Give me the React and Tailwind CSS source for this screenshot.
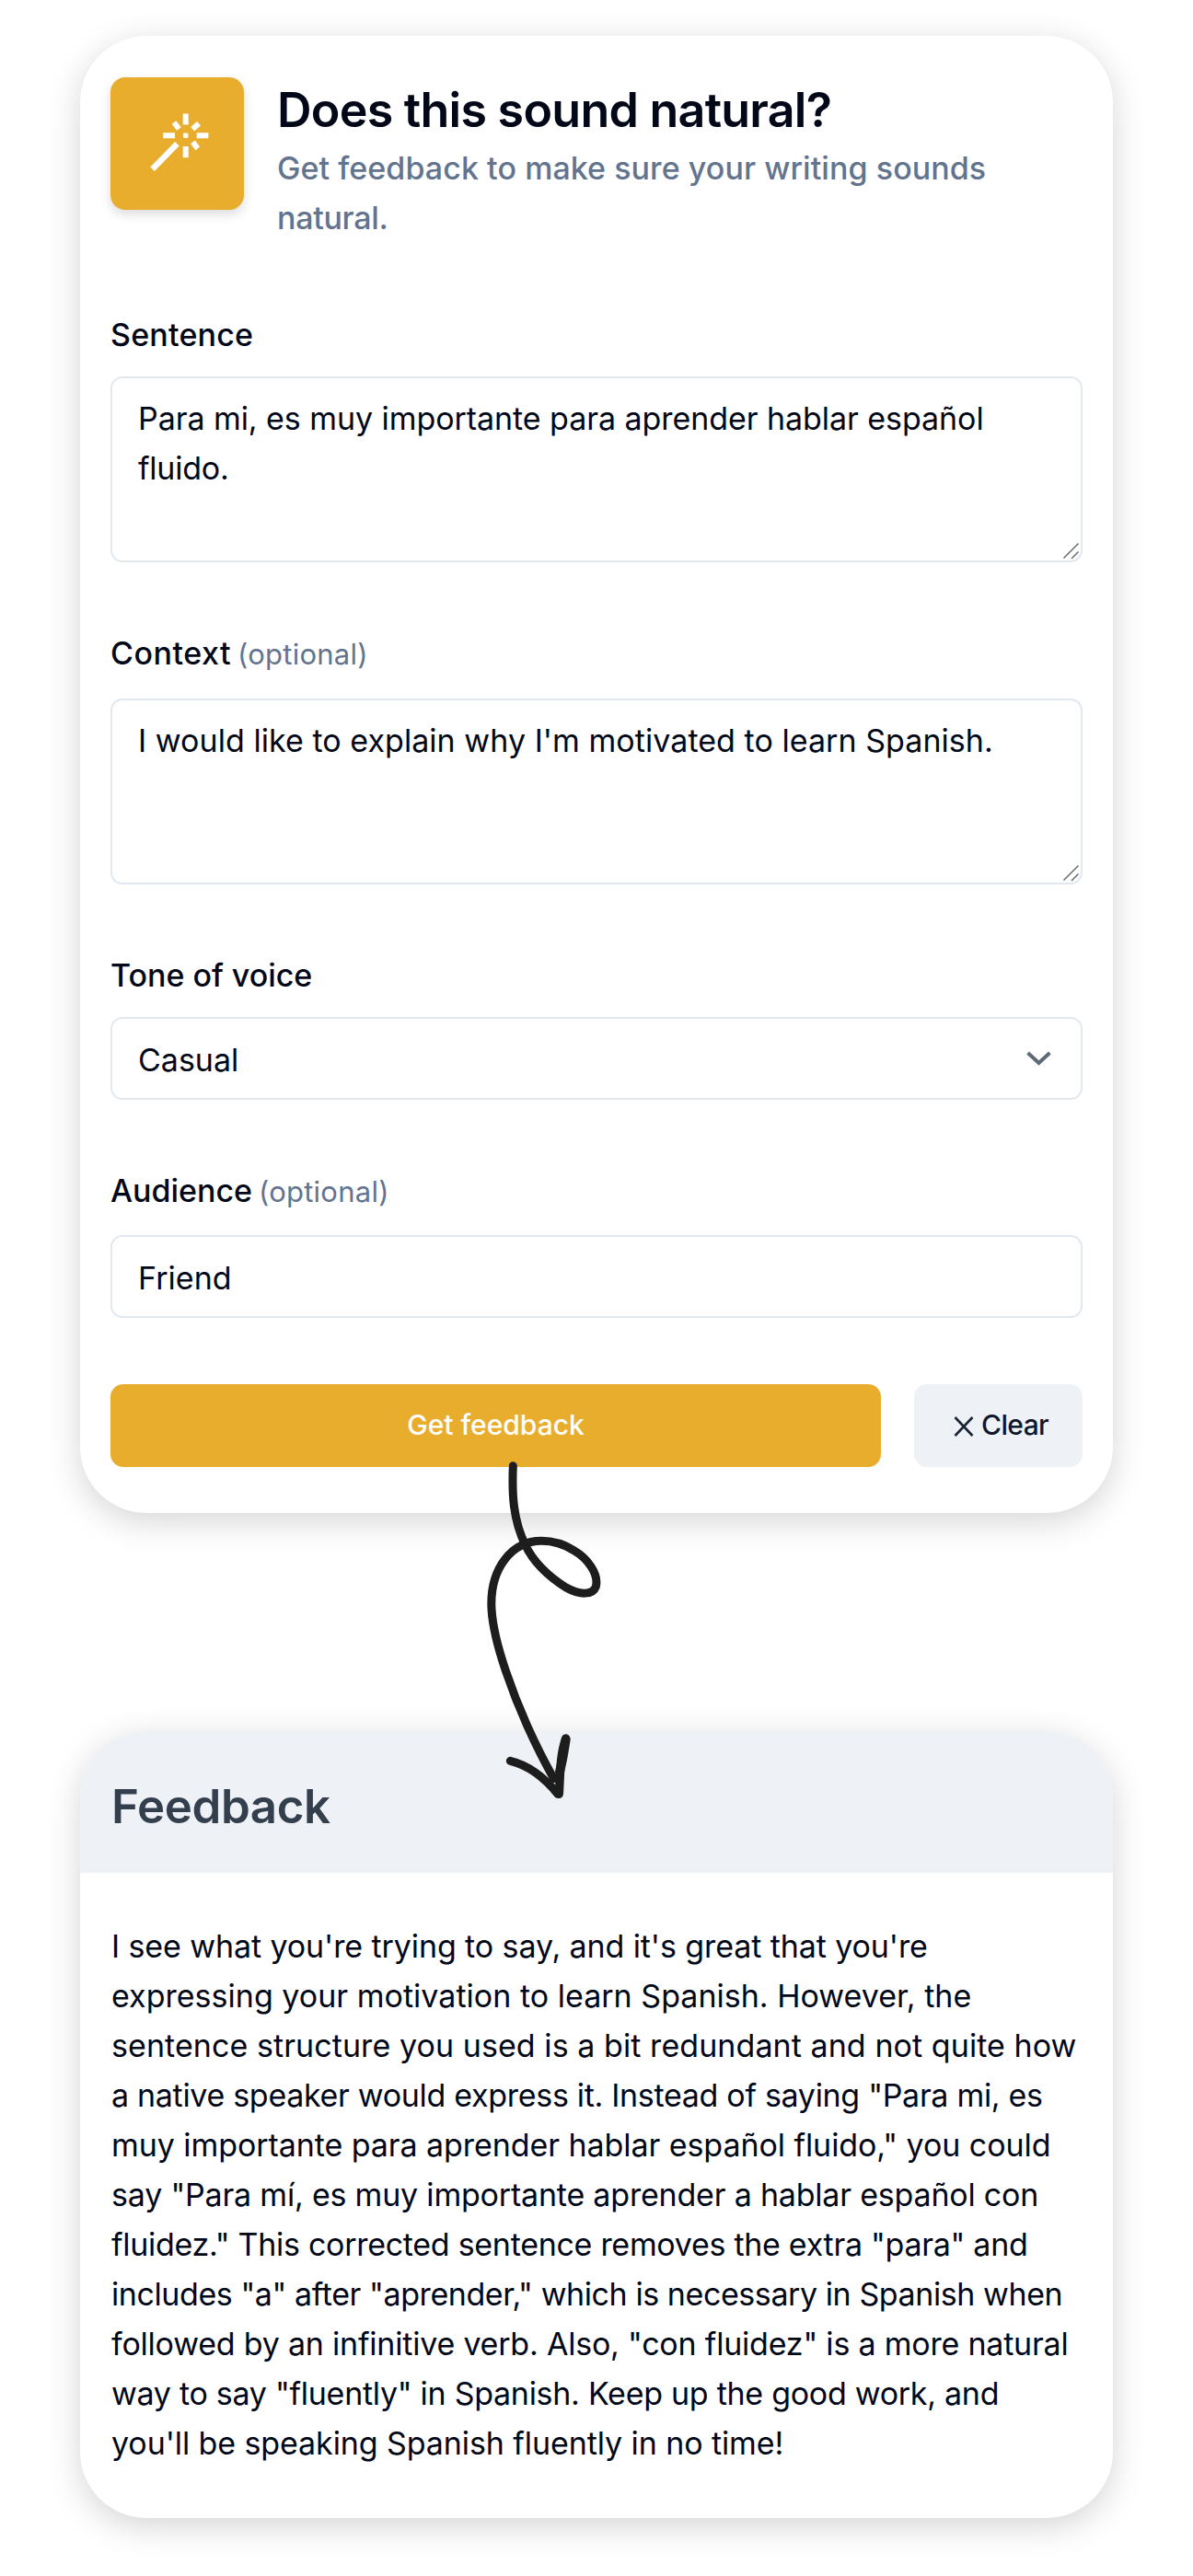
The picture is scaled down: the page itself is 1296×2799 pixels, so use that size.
import React from "react";

const FEEDBACK_LINES = [
  { text: "I see what you're trying to say, and it's great that you're", tracking: "tracking-[-0.1px]" },
  { text: "expressing your motivation to learn Spanish. However, the", tracking: "tracking-[0.02px]" },
  { text: "sentence structure you used is a bit redundant and not quite how", tracking: "tracking-[0.07px]" },
  { text: 'a native speaker would express it. Instead of saying "Para mi, es', tracking: "tracking-[-0.31px]" },
  { text: 'muy importante para aprender hablar español fluido," you could', tracking: "tracking-[-0.07px]" },
  { text: 'say "Para mí, es muy importante aprender a hablar español con', tracking: "tracking-[-0.2px]" },
  { text: 'fluidez." This corrected sentence removes the extra "para" and', tracking: "tracking-[-0.29px]" },
  { text: 'includes "a" after "aprender," which is necessary in Spanish when', tracking: "tracking-[-0.42px]" },
  { text: 'followed by an infinitive verb. Also, "con fluidez" is a more natural', tracking: "tracking-[-0.21px]" },
  { text: 'way to say "fluently" in Spanish. Keep up the good work, and', tracking: "tracking-[-0.28px]" },
  { text: "you'll be speaking Spanish fluently in no time!", tracking: "tracking-[-0.09px]" },
];

function WandIcon() {
  return (
    <svg viewBox="0 0 145 144" className="h-[144px] w-[145px]" fill="none" stroke="#fff" strokeWidth="6">
      <path d="M45.6 99.8 L72.4 72.2" strokeWidth="6.4" />
      <path d="M81.7 39.4V51.6M81.7 75V87.2M57.2 63.3H70M93.7 63.3H106.4" />
      <path d="M69 49 L74.4 56M89.2 56.2 L96 50.2M89.4 70.4 L94.8 77.4" />
      <rect x="79" y="60.6" width="5.4" height="5.4" rx="1.2" fill="#fff" stroke="none" />
    </svg>
  );
}

function FieldLabel({ children, optional, className }) {
  return (
    <div className="flex h-[54px] items-baseline gap-[7px] pt-px leading-[54px]">
      <span className={`font-medium ${className}`}>{children}</span>
      {optional && <span className="text-[31px] tracking-[0.25px] text-slate-500">(optional)</span>}
    </div>
  );
}

function TextArea({ children }) {
  return (
    <div className="relative h-[202px] rounded-[13px] border-2 border-slate-200 px-[28px] pt-[17px] leading-[54px] whitespace-nowrap">
      {children}
      <svg viewBox="0 0 20 20" className="absolute right-0 bottom-0 h-5 w-5" fill="none" stroke="#6b6b6b" strokeWidth="1.5">
        <path d="M1.5 17.5 L17.5 1.5M10 18 L17.5 10.5" />
      </svg>
    </div>
  );
}

function FormCard() {
  return (
    <section className="h-[1605px] rounded-[72px] bg-white pt-[45px] pr-[33px] pl-[33px] shadow-[0_9px_36px_rgba(0,0,0,0.17)]">
      <header className="flex gap-[36px]">
        <div className="h-[144px] w-[145px] shrink-0 rounded-[16px] bg-[#e9ad2e] shadow-[0_5px_12px_rgba(0,0,0,0.14)]">
          <WandIcon />
        </div>
        <div className="pt-[6px]">
          <h1 className="text-[52px] leading-[60px] font-semibold tracking-[-0.76px] whitespace-nowrap">Does this sound natural?</h1>
          <p className="mt-[6px] leading-[54px] font-medium whitespace-nowrap text-slate-500">
            <span className="block tracking-[0.06px]">Get feedback to make sure your writing sounds</span>
            <span className="block tracking-[-0.3px]">natural.</span>
          </p>
        </div>
      </header>

      <div className="mt-[72px] flex flex-col gap-[71px]">
        <div className="flex flex-col gap-[19px]">
          <FieldLabel className="tracking-[0.19px]">Sentence</FieldLabel>
          <TextArea>
            <span className="block tracking-[-0.06px]">Para mi, es muy importante para aprender hablar español</span>
            <span className="block tracking-[-0.23px]">fluido.</span>
          </TextArea>
        </div>
        <div className="flex flex-col gap-[23px]">
          <FieldLabel optional className="tracking-[0.5px]">Context</FieldLabel>
          <TextArea>
            <span className="block tracking-[0.05px]">I would like to explain why I'm motivated to learn Spanish.</span>
          </TextArea>
        </div>
        <div className="flex flex-col gap-[19px]">
          <FieldLabel className="tracking-[-0.03px]">Tone of voice</FieldLabel>
          <div className="flex h-[90px] items-center justify-between rounded-[13px] border-2 border-slate-200 pt-[3px] pr-[32px] pl-[28px]">
            <span>Casual</span>
            <svg viewBox="0 0 27 16" className="mb-[3px] h-4 w-[27px]" fill="none" stroke="#5f6978" strokeWidth="4">
              <path d="M1.6 2 L13.5 13 L25.4 2" />
            </svg>
          </div>
        </div>
        <div className="flex flex-col gap-[22px]">
          <FieldLabel optional className="tracking-[-0.03px]">Audience</FieldLabel>
          <div className="flex h-[90px] items-center rounded-[13px] border-2 border-slate-200 px-[28px] pt-[2px]">
            <span className="tracking-[0.05px]">Friend</span>
          </div>
        </div>
      </div>

      <div className="mt-[72px] flex gap-9">
        <button className="h-[90px] w-[837px] rounded-[14px] bg-[#e9ad2e] pb-[2px] text-[30px] font-medium text-white">Get feedback</button>
        <button className="flex h-[90px] w-[183px] items-center gap-[8px] rounded-[14px] bg-[#eef1f6] pb-[2px] pl-[43px] text-[30px] font-medium tracking-[-0.6px] text-slate-900">
          <svg viewBox="0 0 22 22" className="mt-[3px] h-[22px] w-[22px]" fill="none" stroke="#1b2436" strokeWidth="2.6">
            <path d="M1.5 1 L20.5 21M20.5 1 L1.5 21" />
          </svg>
          Clear
        </button>
      </div>
    </section>
  );
}

function FeedbackCard() {
  return (
    <section className="mt-[237px] overflow-hidden rounded-[72px] bg-white pb-[54px] shadow-[0_9px_36px_rgba(0,0,0,0.17)]">
      <div className="flex h-[154px] items-center bg-[#eef1f6] pt-[10px] pl-[34px]">
        <h2 className="text-[51px] font-semibold tracking-[-0.4px] text-[#343f4e]">Feedback</h2>
      </div>
      <p className="pt-[53px] pl-[34px] leading-[54px] whitespace-nowrap">
        {FEEDBACK_LINES.map((line) => (
          <span key={line.text} className={`block ${line.tracking}`}>{line.text}</span>
        ))}
      </p>
    </section>
  );
}

function CurlyArrow() {
  return (
    <svg viewBox="0 0 600 1230" className="absolute top-[1570px] left-[500px] h-[410px] w-[200px]" fill="none" stroke="#1d1d1d" strokeWidth="27" strokeLinecap="round" strokeLinejoin="round">
      <path d="M172 68 C168 160 172 245 212 326 C240 385 290 430 345 465 C390 490 432 490 442 462 C452 420 415 370 370 344 C335 322 300 313 265 313 C170 313 95 400 102 535 C108 650 180 830 218 915 C245 975 275 1035 305 1088" />
      <path d="M163 1030 C225 1045 275 1085 318 1138" />
      <path d="M344 957 C325 1010 326 1070 322 1138" strokeWidth="28" />
      <path d="M344 960 C338 1000 332 1035 324 1065" strokeWidth="30" />
    </svg>
  );
}

export default function App() {
  return (
    <main className="relative h-[2799px] w-[1296px] overflow-hidden bg-white pt-[39px] pl-[87px] font-['Inter',sans-serif] text-[34px] text-[#020817]">
      <div className="w-[1122px]">
        <FormCard />
        <FeedbackCard />
      </div>
      <CurlyArrow />
    </main>
  );
}
